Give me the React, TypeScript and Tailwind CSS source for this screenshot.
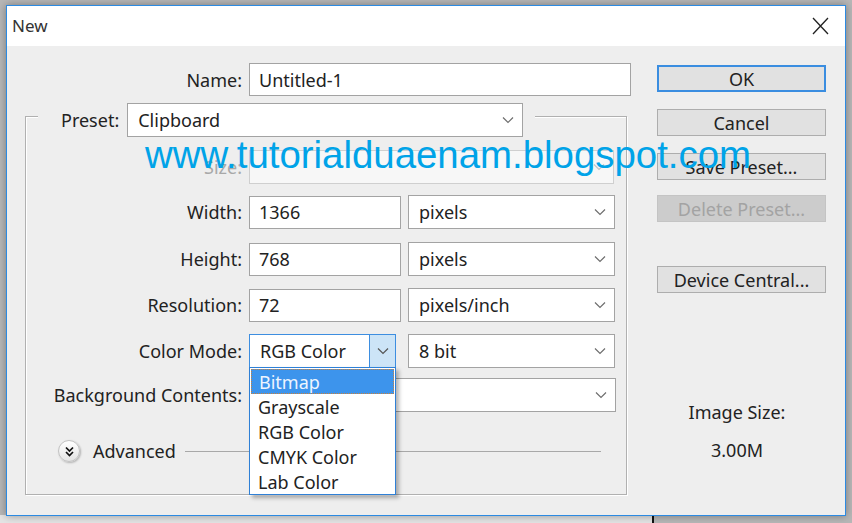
import React from "react";

const Chevron = ({ color = "#6e6e6e" }: { color?: string }) => (
  <svg width="12" height="8" viewBox="0 0 12 8" className="shrink-0">
    <path d="M1 1.5 L6 6.5 L11 1.5" fill="none" stroke={color} strokeWidth="1.2" />
  </svg>
);

const Select = ({
  text,
  w,
  disabled,
}: {
  text: string;
  w: string;
  disabled?: boolean;
}) => (
  <div
    className={`${w} h-[34px] flex items-center justify-between pl-[10px] pr-[8px] border ${
      disabled ? "border-[#cfcfcf] bg-[#f7f7f7]" : "border-[#a3a3a3] bg-white"
    }`}
  >
    <span>{text}</span>
    <Chevron color={disabled ? "#c4c4c4" : "#6e6e6e"} />
  </div>
);

const Input = ({ text, w }: { text: string; w: string }) => (
  <div className={`${w} h-[33px] flex items-center pl-[9px] border border-[#a3a3a3] bg-white`}>
    {text}
  </div>
);

const Label = ({ text, gray }: { text: string; gray?: boolean }) => (
  <div className={`w-[216px] text-right shrink-0 ${gray ? "text-[#a8a8a8]" : ""}`}>{text}</div>
);

const Btn = ({
  text,
  kind,
  mt,
}: {
  text: string;
  kind?: "default" | "disabled";
  mt: string;
}) => {
  const cls =
    kind === "default"
      ? "border-2 border-[#3a8de0] bg-[#e1e1e1]"
      : kind === "disabled"
      ? "border border-[#c4c4c4] bg-[#cccccc] text-[#a3a3a3]"
      : "border border-[#adadad] bg-[#e1e1e1]";
  return (
    <div className={`${mt} w-[169px] h-[27px] flex items-center justify-center ${cls}`}>{text}</div>
  );
};

export default function App() {
  return (
    <div className="relative w-[852px] h-[523px] overflow-hidden bg-[#b7b7b7] pt-[5px] pl-[6px] font-['Noto_Sans',sans-serif] text-[18px] text-[#222222] leading-[24px]">
      <div className="absolute left-0 bottom-0 w-[652px] h-[8px] bg-[#e4e4e4]" />
      <div className="absolute left-[652px] bottom-0 w-[2px] h-[8px] bg-[#111111]" />
      <div className="relative w-[840px] h-[511px] border border-[#2b8ae2] flex flex-col shadow-[0_0_8px_rgba(0,0,0,0.35)]">
        {/* title bar */}
        <div className="h-[40px] bg-white flex items-center justify-between pl-[5px] pr-[16px] shrink-0">
          <span className="text-[17px] text-[#333333]">New</span>
          <svg width="17" height="18" viewBox="0 0 17 18">
            <path d="M1 1 L16 17 M16 1 L1 17" stroke="#222" strokeWidth="1.3" fill="none" />
          </svg>
        </div>
        {/* body */}
        <div className="flex-1 bg-[#eeeeee] flex">
          <div className="w-[650px] shrink-0">
            {/* Name */}
            <div className="mt-[17px] flex items-center gap-[7px]">
              <div className="w-[235px] text-right shrink-0">Name:</div>
              <Input text="Untitled-1" w="w-[382px]" />
            </div>
            {/* group box */}
            <div className="mt-[20px] ml-[18px] w-[602px] h-[379px] border border-[#b0b0b0] shadow-[inset_1px_1px_0_#ffffff,1px_1px_0_#ffffff]">
              <div className="-mt-[14px] ml-[12px] w-[497px] bg-[#eeeeee] flex items-center pl-[23px] gap-[8px]">
                <span>Preset:</span>
                <Select text="Clipboard" w="w-[396px]" />
              </div>
              <div className="mt-[13px] flex items-center gap-[7px]">
                <Label text="Size:" gray />
                <Select text="" w="w-[365px]" disabled />
              </div>
              <div className="mt-[11px] flex items-center gap-[7px]">
                <Label text="Width:" />
                <Input text="1366" w="w-[152px]" />
                <Select text="pixels" w="w-[207px]" />
              </div>
              <div className="mt-[13px] flex items-center gap-[7px]">
                <Label text="Height:" />
                <Input text="768" w="w-[152px]" />
                <Select text="pixels" w="w-[207px]" />
              </div>
              <div className="mt-[12px] flex items-center gap-[7px]">
                <Label text="Resolution:" />
                <Input text="72" w="w-[152px]" />
                <Select text="pixels/inch" w="w-[207px]" />
              </div>
              <div className="mt-[12px] flex items-center gap-[7px]">
                <Label text="Color Mode:" />
                <div className="relative w-[147px] h-[34px] flex items-center border border-[#3d8ee0] bg-white">
                  <span className="flex-1 pl-[10px]">RGB Color</span>
                  <div className="w-[26px] h-full flex items-center justify-center border-l border-[#3d8ee0] bg-[#cce4f7]">
                    <Chevron color="#555555" />
                  </div>
                  {/* open list */}
                  <div className="absolute left-[-1px] top-[32px] w-[147px] z-10 bg-white border border-[#2f80d6] pt-[1px] shadow-[3px_3px_4px_rgba(0,0,0,0.3)]">
                    <div className="h-[25px] mx-[1px] flex items-center pl-[7px] bg-[#3d94ec] text-[#eef5ff] border border-dotted border-[#c8813c]">
                      Bitmap
                    </div>
                    <div className="h-[25px] flex items-center pl-[8px]">Grayscale</div>
                    <div className="h-[25px] flex items-center pl-[8px]">RGB Color</div>
                    <div className="h-[25px] flex items-center pl-[8px]">CMYK Color</div>
                    <div className="h-[25px] flex items-center pl-[8px]">Lab Color</div>
                  </div>
                </div>
                <Select text="8 bit" w="w-[207px] ml-[5px]" />
              </div>
              <div className="mt-[10px] flex items-center gap-[7px]">
                <Label text="Background Contents:" />
                <Select text="White" w="w-[367px]" />
              </div>
              <div className="mt-[27px] h-[24px] flex items-center pl-[32px]">
                <div className="w-[22px] h-[22px] rounded-full border border-[#c2c2c2] bg-[linear-gradient(#ffffff,#e4e4e4)] shadow-[1px_1px_2px_rgba(0,0,0,0.25)] flex items-center justify-center">
                  <svg width="11" height="11" viewBox="0 0 11 11">
                    <path d="M2 1.5 L5.5 5 L9 1.5 M2 6 L5.5 9.5 L9 6" fill="none" stroke="#111" strokeWidth="1.7" />
                  </svg>
                </div>
                <span className="ml-[13px]">Advanced</span>
                <div className="flex-1 ml-[9px] mr-[25px] h-[1px] bg-[#a8a8a8]" />
              </div>
            </div>
          </div>
          {/* right column */}
          <div className="flex flex-col pt-[19px]">
            <Btn text="OK" kind="default" mt="mt-0" />
            <Btn text="Cancel" mt="mt-[17px]" />
            <Btn text="Save Preset..." mt="mt-[17px]" />
            <Btn text="Delete Preset..." kind="disabled" mt="mt-[15px]" />
            <Btn text="Device Central..." mt="mt-[44px]" />
            <div className="mt-[107px] w-[160px] text-center">Image Size:</div>
            <div className="mt-[14px] w-[160px] text-center">3.00M</div>
          </div>
        </div>
        {/* watermark */}
        <div className="absolute left-[138px] top-[130px] z-20 font-['Liberation_Sans',Arial,sans-serif] text-[38.4px] leading-none text-[#00a3e8] whitespace-nowrap">
          www.tutorialduaenam.blogspot.com
        </div>
      </div>
    </div>
  );
}
